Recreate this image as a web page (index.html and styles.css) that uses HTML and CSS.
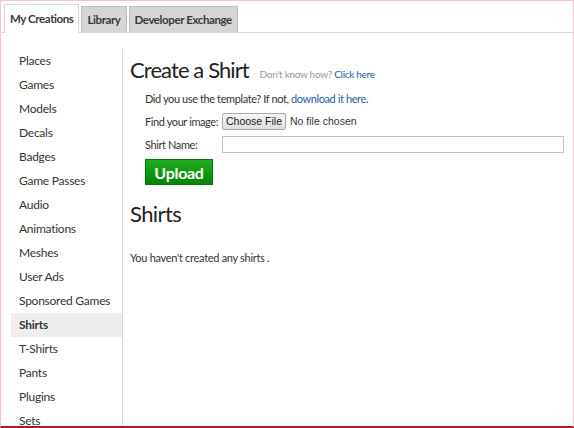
FILE: index.html
```html
<!DOCTYPE html>
<html lang="en">
  <head>
    <meta charset="UTF-8" />
    <title>Create a Shirt</title>
    <link rel="stylesheet" href="styles.css">
  </head>
  <body>
    <div class="frame">
      <div class="tabs">
        <div class="tab active">My Creations</div>
        <div class="tab">Library</div>
        <div class="tab">Developer Exchange</div>
      </div>
      <div class="main">
        <ul class="sidebar">
          <li>Places</li>
          <li>Games</li>
          <li>Models</li>
          <li>Decals</li>
          <li>Badges</li>
          <li>Game Passes</li>
          <li>Audio</li>
          <li>Animations</li>
          <li>Meshes</li>
          <li>User Ads</li>
          <li>Sponsored Games</li>
          <li class="selected">Shirts</li>
          <li>T-Shirts</li>
          <li>Pants</li>
          <li>Plugins</li>
          <li>Sets</li>
        </ul>
        <div class="content">
          <h1>Create a Shirt <span class="hint">Don't know how? <a href="#">Click here</a></span></h1>
          <div class="form">
            <p class="template">Did you use the template? If not, <a href="#">download it here</a>.</p>
            <div class="row">
              <label class="label">Find your image:</label>
              <span class="file-btn">Choose File</span>
              <span class="file-none">No file chosen</span>
            </div>
            <div class="row">
              <label class="label">Shirt Name:</label>
              <input type="text" class="name-input" />
            </div>
            <button class="upload">Upload</button>
          </div>
          <h2>Shirts</h2>
          <p class="empty">You haven't created any shirts .</p>
        </div>
      </div>
    </div>
  </body>
</html>
```

FILE: styles.css
```css
html,
body {
  margin: 0;
  height: 100%;
  background-color: #ffffff;
}
body {
  font-family: Lato, "Open Sans", sans-serif;
  color: #343434;
}
.frame {
  box-sizing: border-box;
  height: 428px;
  border: 1px solid #f3c4c8;
  border-bottom: 2px solid #a41d22;
  overflow: hidden;
}
.tabs {
  display: flex;
  align-items: flex-end;
  gap: 2px;
  height: 31px;
  padding-left: 3px;
  border-bottom: 1px solid #d6d6d6;
}
.tab {
  box-sizing: border-box;
  height: 26px;
  padding: 0 5px;
  line-height: 25px;
  font-size: 11.5px;
  font-weight: bold;
  letter-spacing: -0.4px;
  color: #3a3a3a;
  background-color: #d5d5d5;
  border: 1px solid #bdbdbd;
  border-bottom: none;
}
.tab.active {
  height: 29px;
  line-height: 28px;
  background-color: #ffffff;
  border-color: #d6d6d6;
  margin-bottom: -1px;
}
.main {
  display: flex;
  padding-top: 16px;
}
.sidebar {
  list-style: none;
  margin: 0 0 0 10px;
  padding: 0;
  width: 111px;
  border-right: 1px solid #d9d9d9;
  font-size: 12px;
  letter-spacing: -0.25px;
}
.sidebar li {
  height: 24px;
  line-height: 24px;
  padding-left: 8px;
}
.sidebar li.selected {
  background-color: #eeeeee;
  font-weight: bold;
}
.content {
  flex: 1;
  padding: 0 9px 0 7px;
}
h1 {
  margin: 6px 0 0;
  font-size: 22px;
  font-weight: normal;
  letter-spacing: -0.9px;
  line-height: 30px;
  color: #222222;
}
.hint {
  margin-left: 6px;
  font-size: 10px;
  letter-spacing: -0.3px;
  color: #9a9a9a;
}
a {
  color: #1b5ea5;
  text-decoration: none;
}
.form {
  padding-left: 15px;
  font-size: 11px;
  letter-spacing: -0.4px;
}
.template {
  margin: 2px 0 0;
  line-height: 16px;
}
.row {
  display: flex;
  align-items: center;
  margin-top: 5px;
  height: 18px;
}
.label {
  width: 77px;
  white-space: nowrap;
}
.file-btn {
  box-sizing: border-box;
  height: 17px;
  padding: 0 3px;
  line-height: 15px;
  font-size: 10.5px;
  letter-spacing: 0;
  border: 1px solid #a9a9a9;
  border-radius: 2px;
  background: linear-gradient(#f5f5f5, #dedede);
  color: #222222;
  font-family: Arial, "Liberation Sans", sans-serif;
}
.file-none {
  margin-left: 4px;
  font-size: 10.5px;
  letter-spacing: 0;
  font-family: Arial, "Liberation Sans", sans-serif;
}
.name-input {
  flex: 1;
  box-sizing: border-box;
  height: 17px;
  margin: 0;
  border: 1px solid #c4c4c4;
}
.upload {
  margin-top: 6px;
  width: 68px;
  height: 26px;
  padding: 0;
  font-family: inherit;
  font-size: 16px;
  font-weight: bold;
  letter-spacing: -0.3px;
  color: #ffffff;
  background: linear-gradient(#1eae1e, #058405);
  border: 1px solid #0a730a;
  cursor: pointer;
}
h2 {
  margin: 15px 0 0;
  font-size: 22px;
  font-weight: normal;
  letter-spacing: -0.6px;
  line-height: 28px;
  color: #222222;
}
.empty {
  margin: 23px 0 0;
  font-size: 11px;
  letter-spacing: -0.3px;
}
```
